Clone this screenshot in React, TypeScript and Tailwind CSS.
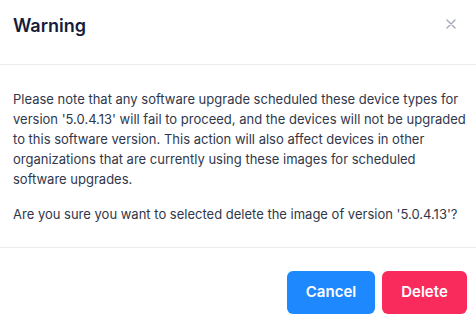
export default function App() {
  return (
    <div
      className="w-[476px] h-[321px] bg-white overflow-hidden flex flex-col"
      style={{ fontFamily: "Inter, 'Noto Sans', sans-serif" }}
    >
      {/* Header */}
      <div className="h-[65px] flex-shrink-0 flex items-start justify-between pl-[13px] pr-[20px] pt-[12px] border-b border-[#ebecef]">
        <h2 className="text-[18px] leading-[28px] font-semibold text-[#151c3b]">Warning</h2>
        <button className="mt-[7px] w-[10px] h-[10px] flex items-center justify-center">
          <svg width="10" height="10" viewBox="0 0 10 10" fill="none">
            <path d="M1 1L9 9M9 1L1 9" stroke="#a3a8bb" strokeWidth="1.4" strokeLinecap="round" />
          </svg>
        </button>
      </div>

      {/* Body */}
      <div className="flex-shrink-0 pl-[13px] pr-[8px] pt-[24px] pb-[23px] border-b border-[#ebecef] text-[13px] leading-[20px] text-[#30374b]">
        <p>
          Please note that any software upgrade scheduled these device types for version
          '5.0.4.13' will fail to proceed, and the devices will not be upgraded to this software
          version. This action will also affect devices in other organizations that are currently
          using these images for scheduled software upgrades.
        </p>
        <p className="mt-[15px]">
          Are you sure you want to selected delete the image of version '5.0.4.13'?
        </p>
      </div>

      {/* Footer */}
      <div className="flex justify-end gap-[7px] pt-[23px] pr-[9px]">
        <button className="w-[88px] h-[43px] rounded-[6px] bg-[#1e88ff] text-white text-[15px] font-semibold">
          Cancel
        </button>
        <button className="w-[85px] h-[43px] rounded-[6px] bg-[#f92a5c] text-white text-[15px] font-semibold">
          Delete
        </button>
      </div>
    </div>
  );
}
